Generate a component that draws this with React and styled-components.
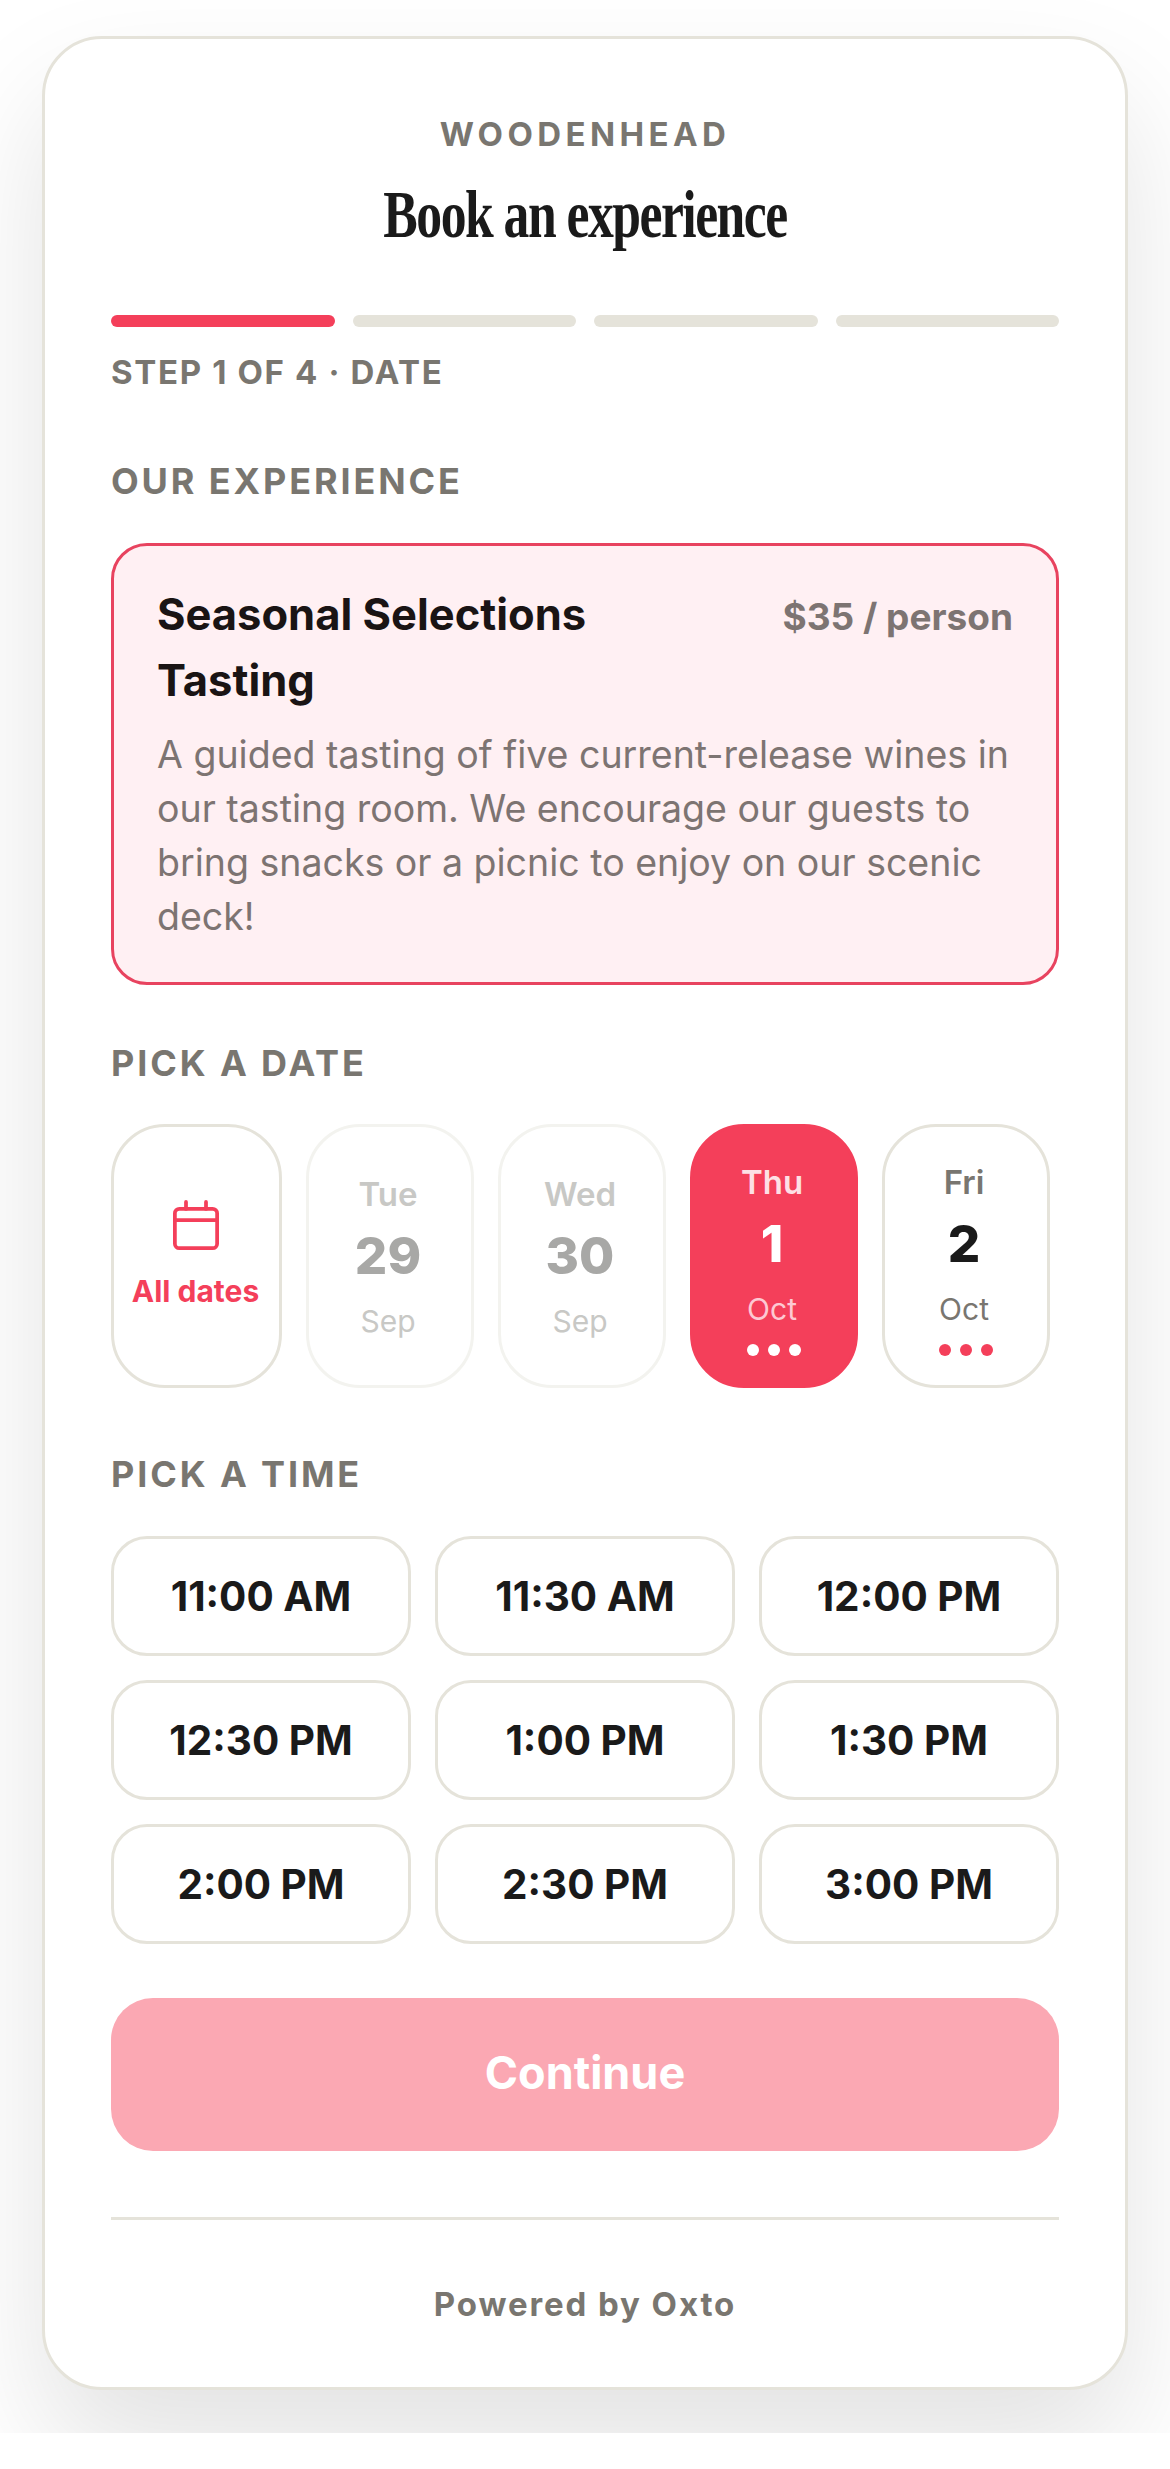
import React from "react";
import styled, { createGlobalStyle } from "styled-components";

const GlobalStyle = createGlobalStyle`
  html, body {
    margin: 0;
    padding: 0;
    background: #fff;
    font-family: Inter, "Liberation Sans", sans-serif;
  }
`;

const Page = styled.div`
  height: 2433px;
  box-sizing: border-box;
  padding: 36px 42px 0;
  background: #fff;
  overflow: hidden;
`;

const Card = styled.main`
  box-sizing: border-box;
  width: 1086px;
  height: 2354px;
  padding: 75px 66px 0;
  background: #fff;
  border: 3px solid #e5e3da;
  border-radius: 60px;
  box-shadow: 0 60px 120px rgba(0, 0, 0, 0.115);
  display: flex;
  flex-direction: column;
`;

const Brand = styled.div`
  text-align: center;
  font-size: 33px;
  line-height: 40px;
  font-weight: 700;
  letter-spacing: 4.4px;
  color: #797670;
`;

const Title = styled.h1`
  margin: 25px 0 0;
  text-align: center;
  font-family: "Liberation Serif", serif;
  font-size: 68px;
  line-height: 70px;
  font-weight: 700;
  letter-spacing: -2px;
  color: #1a1a1a;
  transform: scaleX(0.76);
`;

const Progress = styled.div`
  display: grid;
  grid-template-columns: repeat(4, 1fr);
  gap: 18px;
  margin-top: 66px;
`;

const Segment = styled.div`
  height: 12px;
  border-radius: 6px;
  background: ${(p) => (p.$on ? "#f43f5a" : "#e5e3da")};
`;

const StepLabel = styled.div`
  margin-top: 25px;
  font-size: 33px;
  line-height: 40px;
  font-weight: 700;
  letter-spacing: 1.65px;
  color: #797670;
`;

const SectionLabel = styled.h2`
  margin: ${(p) => p.$top}px 0 0;
  font-size: 36px;
  line-height: 44px;
  font-weight: 700;
  letter-spacing: 2.88px;
  color: #797670;
`;

const Experience = styled.section`
  box-sizing: border-box;
  margin-top: 40px;
  padding: 35px 43px 38px;
  background: #fff0f3;
  border: 3px solid #e8435f;
  border-radius: 36px;
`;

const ExperienceHead = styled.div`
  display: flex;
  justify-content: space-between;
  align-items: baseline;
`;

const ExperienceName = styled.h3`
  margin: 0;
  width: 480px;
  font-size: 43.5px;
  line-height: 66px;
  font-weight: 700;
  color: #1a1414;
`;

const Price = styled.div`
  font-size: 37px;
  line-height: 66px;
  font-weight: 700;
  color: #7d7472;
`;

const ExperienceText = styled.p`
  margin: 15px 0 0;
  font-size: 37.5px;
  line-height: 54px;
  color: #7d7472;
`;

const DateRow = styled.div`
  display: flex;
  gap: 24px;
  margin-top: 39px;
`;

const DateCard = styled.button`
  box-sizing: border-box;
  flex: 0 0 ${(p) => (p.$wide ? 171 : 168)}px;
  height: 264px;
  padding: ${(p) => (p.$center ? "0 2px 2px 0" : p.$hasDots ? "34px 0 0" : "46px 0 0")};
  border: 3px solid ${(p) => (p.$active ? "#f43f5a" : p.$off ? "#f3f3ef" : "#e5e3da")};
  border-radius: 54px;
  background: ${(p) => (p.$active ? "#f43f5a" : "#fff")};
  font-family: inherit;
  display: flex;
  flex-direction: column;
  align-items: center;
  justify-content: ${(p) => (p.$center ? "center" : "flex-start")};
`;

const Day = styled.span`
  padding-right: 4px;
  font-size: 33px;
  line-height: 42px;
  font-weight: 600;
  color: ${(p) => (p.$active ? "#fde0e5" : p.$off ? "#c8c8c5" : "#797670")};
`;

const DayNumber = styled.span`
  margin-top: 10px;
  padding-right: 4px;
  font-size: 51px;
  line-height: 62px;
  font-weight: 800;
  color: ${(p) => (p.$active ? "#fff" : p.$off ? "#a8a8a6" : "#1a1a1a")};
`;

const Month = styled.span`
  margin-top: 15px;
  padding-right: 4px;
  font-size: 30px;
  line-height: 38px;
  color: ${(p) => (p.$active ? "#fdc9d2" : p.$off ? "#c8c8c5" : "#797670")};
`;

const Dots = styled.span`
  display: flex;
  gap: 9px;
  margin-top: 16px;
`;

const Dot = styled.span`
  width: 12px;
  height: 12px;
  border-radius: 50%;
  background: ${(p) => (p.$active ? "#fff" : "#f43f5a")};
`;

const AllDates = styled.span`
  margin-top: 22px;
  font-size: 30px;
  line-height: 38px;
  font-weight: 700;
  color: #f43f5a;
`;

const TimeGrid = styled.div`
  display: grid;
  grid-template-columns: repeat(3, 1fr);
  gap: 24px;
  margin-top: 40px;
`;

const TimeButton = styled.button`
  height: 120px;
  background: #fff;
  border: 3px solid #e5e3da;
  border-radius: 36px;
  font-family: inherit;
  font-size: 40.5px;
  font-weight: 700;
  color: #1a1a1a;
`;

const Continue = styled.button`
  height: 153px;
  margin-top: 54px;
  padding: 0 0 4px;
  background: #fba8b3;
  border: 0;
  border-radius: 42px;
  font-family: inherit;
  font-size: 45px;
  font-weight: 700;
  color: #fff;
`;

const Footer = styled.footer`
  margin-top: 66px;
  padding-top: 64px;
  border-top: 3px solid #e5e3da;
  text-align: center;
  font-size: 33px;
  line-height: 40px;
  font-weight: 700;
  letter-spacing: 1.9px;
  color: #797670;
`;

const CalendarIcon = () => (
  <svg width="46" height="50" viewBox="0 0 46 50" fill="none" stroke="#f43f5a" strokeWidth="3.75" strokeLinecap="round" strokeLinejoin="round">
    <rect x="1.875" y="8.75" width="42.25" height="39.375" rx="4.5" />
    <path d="M1.875 20h42.25M13 1.875v7M33 1.875v7" />
  </svg>
);

const days = [
  { day: "Tue", num: "29", month: "Sep", off: true },
  { day: "Wed", num: "30", month: "Sep", off: true },
  { day: "Thu", num: "1", month: "Oct", active: true },
  { day: "Fri", num: "2", month: "Oct" },
];

const times = [
  "11:00 AM", "11:30 AM", "12:00 PM",
  "12:30 PM", "1:00 PM", "1:30 PM",
  "2:00 PM", "2:30 PM", "3:00 PM",
];

export default function App() {
  return (
    <Page>
      <GlobalStyle />
      <Card>
        <Brand>WOODENHEAD</Brand>
        <Title>Book an experience</Title>
        <Progress>
          <Segment $on />
          <Segment />
          <Segment />
          <Segment />
        </Progress>
        <StepLabel>STEP 1 OF 4 · DATE</StepLabel>

        <SectionLabel $top={67}>OUR EXPERIENCE</SectionLabel>
        <Experience>
          <ExperienceHead>
            <ExperienceName>Seasonal Selections Tasting</ExperienceName>
            <Price>$35 / person</Price>
          </ExperienceHead>
          <ExperienceText>
            A guided tasting of five current-release wines in our tasting room. We encourage our guests to bring snacks or a picnic to enjoy on our scenic deck!
          </ExperienceText>
        </Experience>

        <SectionLabel $top={56}>PICK A DATE</SectionLabel>
        <DateRow>
          <DateCard $wide $center>
            <CalendarIcon />
            <AllDates>All dates</AllDates>
          </DateCard>
          {days.map((d) => (
            <DateCard key={d.day} $active={d.active} $off={d.off} $hasDots={!d.off}>
              <Day $active={d.active} $off={d.off}>{d.day}</Day>
              <DayNumber $active={d.active} $off={d.off}>{d.num}</DayNumber>
              <Month $active={d.active} $off={d.off}>{d.month}</Month>
              {!d.off && (
                <Dots>
                  <Dot $active={d.active} />
                  <Dot $active={d.active} />
                  <Dot $active={d.active} />
                </Dots>
              )}
            </DateCard>
          ))}
        </DateRow>

        <SectionLabel $top={64}>PICK A TIME</SectionLabel>
        <TimeGrid>
          {times.map((t) => (
            <TimeButton key={t}>{t}</TimeButton>
          ))}
        </TimeGrid>

        <Continue>Continue</Continue>
        <Footer>Powered by Oxto</Footer>
      </Card>
    </Page>
  );
}
